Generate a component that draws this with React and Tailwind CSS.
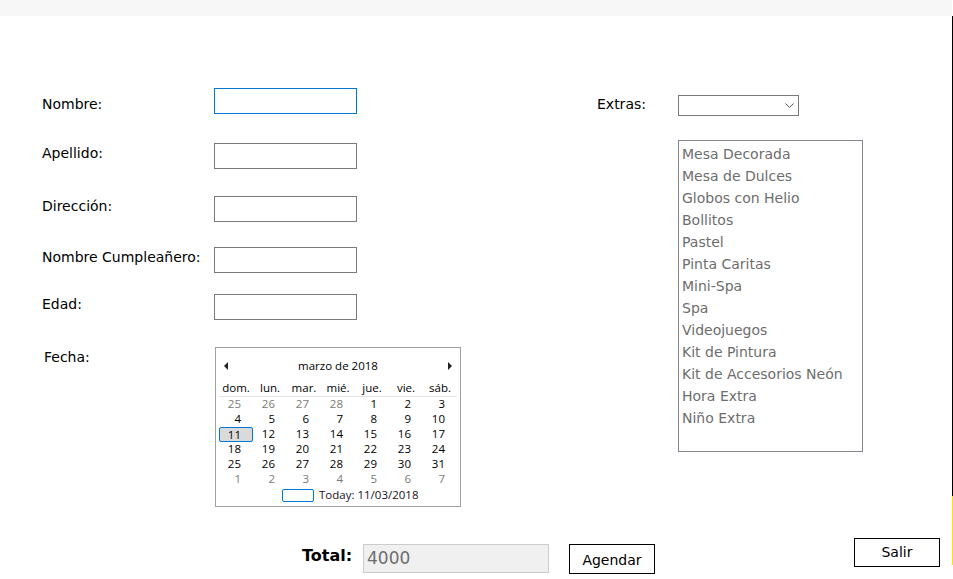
import React from "react";

const labelFont = "font-['DejaVu_Sans',sans-serif]";

const extras = [
    "Mesa Decorada",
    "Mesa de Dulces",
    "Globos con Helio",
    "Bollitos",
    "Pastel",
    "Pinta Caritas",
    "Mini-Spa",
    "Spa",
    "Videojuegos",
    "Kit de Pintura",
    "Kit de Accesorios Neón",
    "Hora Extra",
    "Niño Extra",
];

const dayNames = ["dom.", "lun.", "mar.", "mié.", "jue.", "vie.", "sáb."];

// march 2018, with the trailing days of feb and leading days of april
const weeks = [
    [[25, 0], [26, 0], [27, 0], [28, 0], [1, 1], [2, 1], [3, 1]],
    [[4, 1], [5, 1], [6, 1], [7, 1], [8, 1], [9, 1], [10, 1]],
    [[11, 1], [12, 1], [13, 1], [14, 1], [15, 1], [16, 1], [17, 1]],
    [[18, 1], [19, 1], [20, 1], [21, 1], [22, 1], [23, 1], [24, 1]],
    [[25, 1], [26, 1], [27, 1], [28, 1], [29, 1], [30, 1], [31, 1]],
    [[1, 0], [2, 0], [3, 0], [4, 0], [5, 0], [6, 0], [7, 0]],
];

const Field = ({ label, focused, labelPad = "pt-[2px]", gap }) => (
    <div className={`flex items-start ${gap}`}>
        <div className={`w-[172px] ${labelPad} text-[14px] leading-[17px] text-black`}>{label}</div>
        <div
            className={`w-[143px] h-[26px] bg-white border ${
                focused ? "border-[#0078d7]" : "border-[#7a7a7a]"
            }`}
        />
    </div>
);

const Calendar = () => (
    <div className="w-[246px] h-[160px] border border-[#a0a0a0] bg-white flex flex-col font-['Open_Sans',sans-serif] text-[11.5px] text-black">
        {/* header */}
        <div className="mt-[10px] h-[16px] flex items-center justify-between px-[8px]">
            <svg width="5" height="8" viewBox="0 0 5 8">
                <polygon points="4,0 4,8 0,4" fill="#222" />
            </svg>
            <span className="leading-[16px]">marzo de 2018</span>
            <svg width="5" height="8" viewBox="0 0 5 8">
                <polygon points="1,0 1,8 5,4" fill="#222" />
            </svg>
        </div>

        {/* day names */}
        <div className="mt-[6px] mx-[3px] h-[17px] flex border-b border-[#e3e3e3]">
            {dayNames.map((d) => (
                <div key={d} className="w-[34px] text-center leading-[16px]">
                    {d}
                </div>
            ))}
        </div>

        {/* dates */}
        <div className="mx-[3px] flex flex-col">
            {weeks.map((week, wi) => (
                <div key={wi} className="h-[15px] flex">
                    {week.map(([n, cur], di) => {
                        const today = wi === 2 && di === 0;
                        return (
                            <div
                                key={di}
                                className={`w-[34px] h-[15px] text-right leading-[14px] ${
                                    cur ? "text-black" : "text-[#7a7a7a]"
                                } ${
                                    today
                                        ? "bg-[#dadada] border border-[#0078d7] rounded-[2px] pr-[11px] leading-[12px]"
                                        : "pr-[12px]"
                                }`}
                            >
                                {n}
                            </div>
                        );
                    })}
                </div>
            ))}
        </div>

        {/* today */}
        <div className="h-[16px] flex items-center ml-[66px] gap-[5px]">
            <div className="w-[32px] h-[13px] border border-[#0078d7] rounded-[2px]" />
            <span className="leading-[16px] text-[#1a1020]">Today: 11/03/2018</span>
        </div>
    </div>
);

export default function App() {
    return (
        <div className={`w-[953px] h-[579px] bg-white flex flex-col overflow-hidden ${labelFont}`}>
            {/* top strip */}
            <div className="h-[16px] w-[952px] bg-[#f7f7f7]" />

            <div className="flex flex-1">
                <div className="w-[952px] flex flex-col">
                    <div className="flex pt-[72px] pl-[42px]">
                        {/* left form */}
                        <div className="flex flex-col w-[419px]">
                            <Field label="Nombre:" focused labelPad="pt-[8px]" />
                            <Field label="Apellido:" gap="mt-[29px]" />
                            <Field label="Dirección:" gap="mt-[27px]" />
                            <Field label="Nombre Cumpleañero:" gap="mt-[25px]" />
                            <Field label="Edad:" gap="mt-[21px]" />
                            <div className="flex items-start mt-[27px]">
                                <div className="w-[173px] pl-[2px] pt-[2px] text-[14px] leading-[17px]">Fecha:</div>
                                <Calendar />
                            </div>
                        </div>

                        {/* extras */}
                        <div className="ml-[136px] flex flex-col">
                            <div className="flex items-start">
                                <div className="w-[81px] pt-[8px] text-[14px] leading-[17px]">Extras:</div>
                                <div className="mt-[7px] w-[121px] h-[21px] border border-[#7a7a7a] bg-white flex items-center justify-end pr-[4px]">
                                    <svg width="9" height="6" viewBox="0 0 9 6">
                                        <polyline points="0.5,0.5 4.5,4.5 8.5,0.5" fill="none" stroke="#555" strokeWidth="1" />
                                    </svg>
                                </div>
                            </div>
                            <div className="ml-[81px] mt-[24px] w-[185px] h-[312px] border border-[#828790] bg-white pt-[2px] pl-[3px]">
                                {extras.map((e) => (
                                    <div key={e} className="h-[22px] leading-[22px] text-[14px] text-[#6d6d6d]">
                                        {e}
                                    </div>
                                ))}
                            </div>
                        </div>
                    </div>

                    {/* bottom bar */}
                    <div className="flex items-start mt-[31px] pl-[302px]">
                        <div className="w-[61px] mt-[7px] text-[16px] font-bold leading-[22px]">Total:</div>
                        <div className="mt-[6px] w-[186px] h-[29px] bg-[#f0f0f0] border border-[#cccccc] flex items-center pl-[3px] text-[17px] text-[#6d6d6d]">
                            4000
                        </div>
                        <button className="ml-[20px] mt-[6px] w-[86px] h-[30px] border border-black bg-white text-[14px] pt-[2px]">
                            Agendar
                        </button>
                        <button className="ml-[199px] w-[86px] h-[29px] border border-black bg-white text-[14px]">
                            Salir
                        </button>
                    </div>
                </div>

                {/* right window edge */}
                <div className="w-[1px] flex flex-col">
                    <div className="h-[480px] bg-black" />
                    <div className="h-[69px] bg-[#ffe600]" />
                </div>
            </div>
        </div>
    );
}
